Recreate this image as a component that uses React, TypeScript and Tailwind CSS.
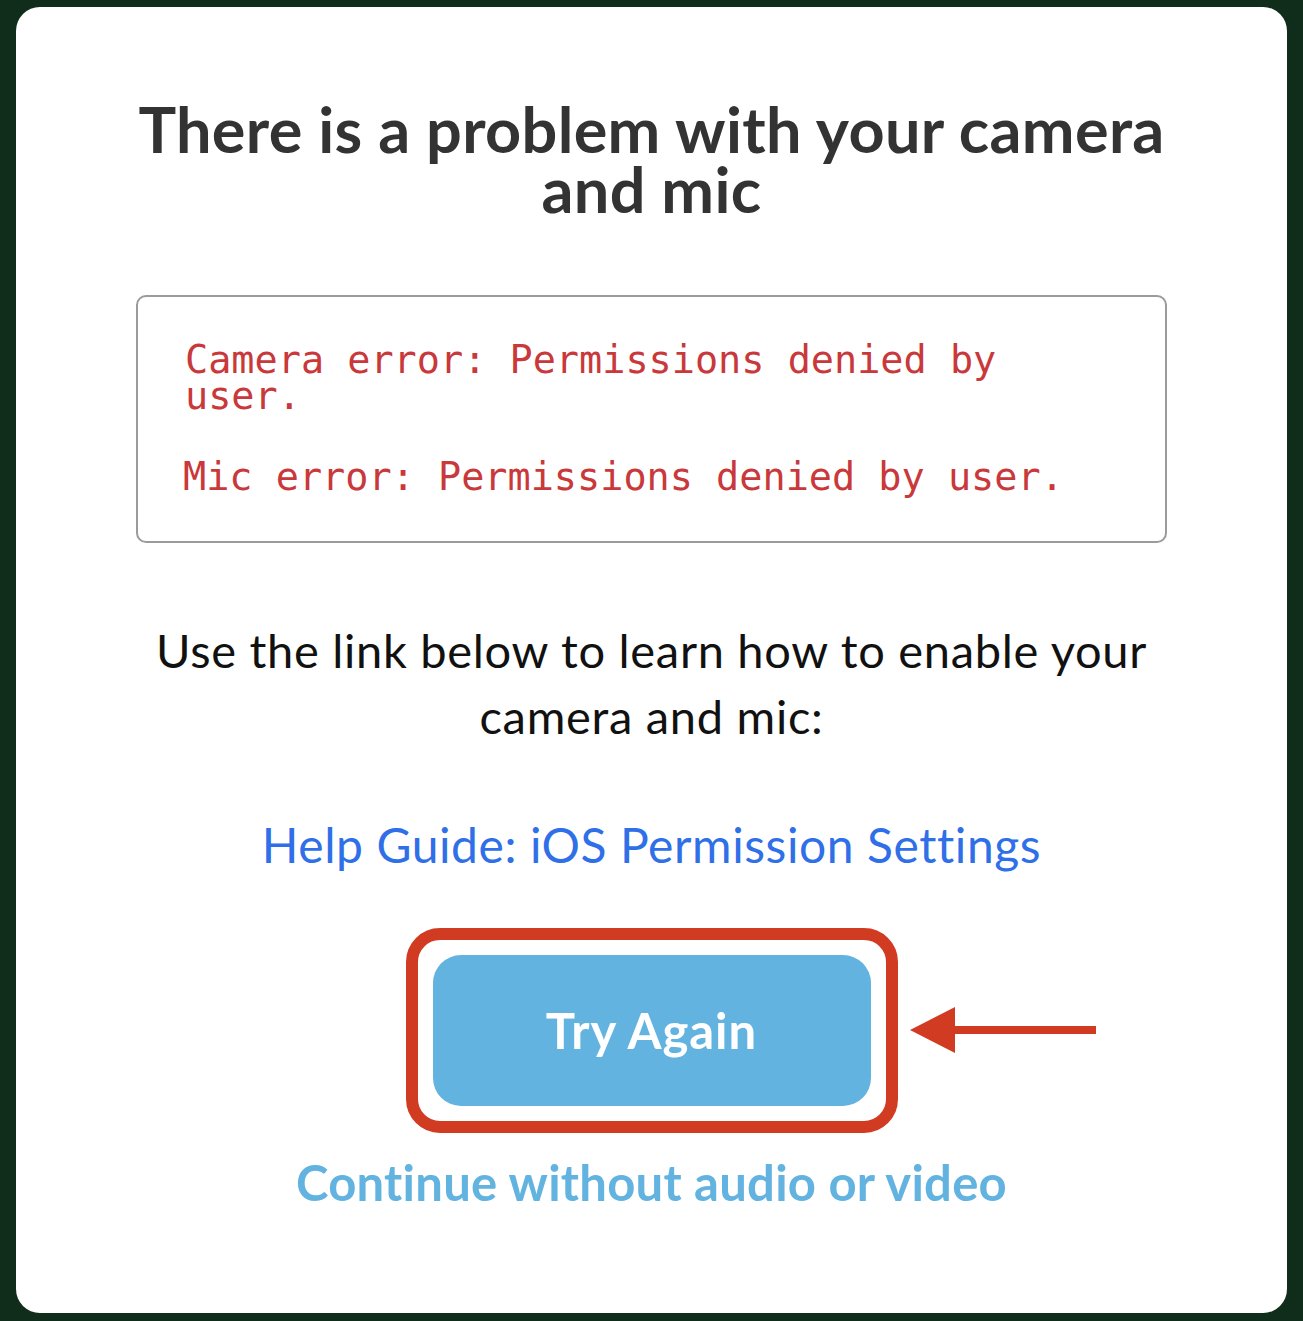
import React from 'react';

const sans = "font-['Lato','Noto_Sans',sans-serif]";

function ArrowLeft() {
  return (
    <svg width="190" height="50" viewBox="0 0 190 50" className="block">
      <polygon points="2,25 47,2 47,48" fill="#d13b22" />
      <rect x="44" y="21" width="144" height="8" fill="#d13b22" />
    </svg>
  );
}

export default function App() {
  return (
    <div className="min-h-[1321px] bg-[#102d1b] px-4 pt-[7px] pb-2">
      <div className={`bg-white rounded-[24px] h-[1306px] flex flex-col items-center pt-[92px] ${sans}`}>
        <h1 className="text-[#333333] font-bold text-[63px] leading-[60px] tracking-[0.005em] text-center max-w-[1060px]">
          There is a problem with your camera and mic
        </h1>

        <div className="mt-[76px] w-[1031px] h-[248px] border-2 border-[#9b9b9b] rounded-[10px] pl-[47px] pt-[45px] font-['DejaVu_Sans_Mono',monospace] text-[#c9383a] text-[38.5px]">
          <p className="leading-[36px] max-w-[860px]">Camera error: Permissions denied by user.</p>
          <p className="leading-[36px] mt-[45px] -ml-[2px]">Mic error: Permissions denied by user.</p>
        </div>

        <p className="mt-[74px] text-[#111111] text-[47px] leading-[66px] tracking-[0.015em] text-center max-w-[1040px]">
          Use the link below to learn how to enable your camera and mic:
        </p>

        <a href="#" className="mt-[68px] text-[#2f6fe8] text-[48px] leading-[56px] tracking-[0.012em]">
          Help Guide: iOS Permission Settings
        </a>

        <div className="relative mt-[55px]">
          <div className="border-[12px] border-[#d13b22] rounded-[34px] p-[15px]">
            <button className="w-[438px] h-[151px] rounded-[28px] bg-[#63b3e0] text-white font-bold text-[49px] tracking-[0.02em]">
              Try Again
            </button>
          </div>
          <div className="absolute left-[502px] top-[77px]">
            <ArrowLeft />
          </div>
        </div>

        <a href="#" className="mt-[21px] text-[#63b3e0] font-bold text-[49px] leading-[56px] tracking-[0.005em]">
          Continue without audio or video
        </a>
      </div>
    </div>
  );
}
